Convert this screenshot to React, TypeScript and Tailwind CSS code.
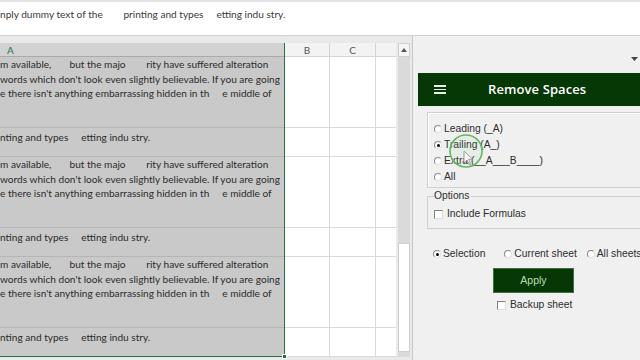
import React from "react"

const sheetFont = { fontFamily: "Lato, 'Open Sans', sans-serif" }
const uiFont = { fontFamily: "'Liberation Sans', Arial, sans-serif" }

// ---------- small controls ----------
function Radio({ checked = false }: { checked?: boolean }) {
  return (
    <span className="relative inline-block w-[8px] h-[8px] rounded-full border border-t-[#8a8a8a] border-l-[#8a8a8a] border-r-[#e0e0e0] border-b-[#e0e0e0] bg-white shrink-0">
      {checked && <span className="absolute left-[1.5px] top-[1.5px] w-[3px] h-[3px] rounded-full bg-black" />}
    </span>
  )
}

function Check() {
  return (
    <span className="inline-block w-[9px] h-[9px] border border-t-[#808080] border-l-[#808080] border-r-[#dcdcdc] border-b-[#dcdcdc] bg-white shrink-0" />
  )
}

// ---------- sheet ----------
const longLines = [
  "m available,       but the majo        rity have suffered alteration",
  "words which don't look even slightly believable. If you are going",
  "e there isn't anything embarrassing hidden in th     e middle of",
]
const shortLine = "nting and types     etting indu stry."

function SheetRow({ tall, last }: { tall: boolean; last?: boolean }) {
  const h = tall ? "h-[71px]" : "h-[29px]"
  return (
    <div className={`flex ${h}`}>
      <div
        className={`w-[284px] bg-[#c9c9c9] text-[#2b2b2b] text-[10.1px] leading-[14.5px] whitespace-pre overflow-hidden ${
          last ? "" : "border-b border-[#b5b5b5]"
        } ${tall ? "" : "pt-[2px]"}`}
      >
        {tall ? longLines.map((l) => <div key={l}>{l}</div>) : <div>{shortLine}</div>}
      </div>
      <div className="w-[1px] bg-[#217346]" />
      <div className="w-[45px] bg-white border-r border-b border-[#dadada]" />
      <div className="w-[46px] bg-white border-r border-b border-[#dadada]" />
      <div className="w-[20px] bg-white border-b border-[#dadada]" />
    </div>
  )
}

function Sheet() {
  return (
    <div className="flex flex-col w-[412px] bg-[#e9e9e9]" style={sheetFont}>
      <div className="h-[7px]" />
      <div className="flex">
        <div className="flex flex-col w-[396px]">
          {/* column headers */}
          <div className="flex h-[14px] text-[10px] leading-[14px]">
            <div className="w-[284px] bg-[#d2d2d2] text-[#217346] pl-[7px] border-b border-[#aaaaaa]">A</div>
            <div className="w-[1px] bg-[#217346]" />
            <div className="w-[45px] bg-[#f3f3f3] text-[#555] text-center border-r border-b border-[#d4d4d4]">B</div>
            <div className="w-[46px] bg-[#f3f3f3] text-[#555] text-center border-r border-b border-[#d4d4d4]">C</div>
            <div className="w-[20px] bg-[#f3f3f3] border-b border-[#d4d4d4]" />
          </div>
          <SheetRow tall />
          <SheetRow tall={false} />
          <SheetRow tall />
          <SheetRow tall={false} />
          <SheetRow tall />
          <div className="relative">
            <SheetRow tall={false} last />
            <div className="absolute left-0 bottom-0 w-[285px] h-[1px] bg-[#217346]" />
            <div className="absolute left-[282px] bottom-[-2px] w-[5px] h-[5px] bg-[#217346] border border-white" />
          </div>
        </div>
        {/* vertical scrollbar */}
        <div className="flex flex-col w-[14px] pl-[2px]">
          <div className="h-[14px] bg-[#f5f5f5] border border-[#d0d0d0] flex items-center justify-center">
            <svg width="6" height="4" viewBox="0 0 6 4">
              <path d="M0 4 L3 0 L6 4 Z" fill="#555" />
            </svg>
          </div>
          <div className="h-[186px] bg-[#dadada]" />
          <div className="h-[109px] bg-white border border-[#cfcfcf]" />
          <div className="flex-1 bg-[#dadada]" />
        </div>
      </div>
    </div>
  )
}

// ---------- task pane ----------
function Pane() {
  return (
    <div
      className="relative flex-1 min-w-0 overflow-hidden flex flex-col bg-[#f0f0f0] border-l border-[#c8c8c8] text-[#2e2e2e]"
      style={uiFont}
    >
      <div className="h-[37px] flex justify-end items-start pt-[21px] pr-[2px]">
        <svg width="7" height="4" viewBox="0 0 7 4">
          <path d="M0 0 L7 0 L3.5 4 Z" fill="#444" />
        </svg>
      </div>

      <div className="h-[33px] ml-[5px] bg-[#053805] flex items-center">
        <div className="ml-[16px] flex flex-col gap-[2px]">
          <span className="block w-[12px] h-[1.5px] bg-[#e8f0e8]" />
          <span className="block w-[12px] h-[1.5px] bg-[#e8f0e8]" />
          <span className="block w-[12px] h-[1.5px] bg-[#e8f0e8]" />
        </div>
        <div
          className="ml-[42px] text-white text-[13px] font-semibold tracking-[0.1px]"
          style={{ fontFamily: "'Open Sans', 'Noto Sans', sans-serif" }}
        >
          Remove Spaces
        </div>
      </div>

      {/* mode group */}
      <div className="ml-[14px] mt-[6px] h-[76px] border border-r-0 border-[#cfcfcf] shadow-[inset_1px_1px_0_#ffffff] pl-[6px] pt-[8px] flex flex-col text-[10.3px] leading-[16px] whitespace-nowrap">
        <label className="flex items-center gap-[2px]">
          <Radio />
          <span>Leading (_A)</span>
        </label>
        <label className="flex items-center gap-[2px]">
          <Radio checked />
          <span>Trailing (A_)</span>
        </label>
        <label className="flex items-center gap-[2px]">
          <Radio />
          <span>Extra (__A___B____)</span>
        </label>
        <label className="flex items-center gap-[2px]">
          <Radio />
          <span>All</span>
        </label>
      </div>

      {/* options group */}
      <div className="relative ml-[14px] mt-[8px] h-[33px] border border-r-0 border-[#cfcfcf] pl-[6px] pt-[10px] text-[10.3px] leading-[14px]">
        <span className="absolute left-[6px] top-[-8px] bg-[#f0f0f0] pr-[1px]">Options</span>
        <label className="flex items-center gap-[4px]">
          <Check />
          <span>Include Formulas</span>
        </label>
      </div>

      {/* scope */}
      <div className="ml-[20px] mt-[18px] flex items-center text-[10.3px] leading-[14px] whitespace-nowrap">
        <label className="flex items-center gap-[2px] shrink-0">
          <Radio checked />
          <span>Selection</span>
        </label>
        <label className="ml-[19px] flex items-center gap-[2px] shrink-0">
          <Radio />
          <span>Current sheet</span>
        </label>
        <label className="ml-[10px] flex items-center gap-[2px] shrink-0">
          <Radio />
          <span>All sheets</span>
        </label>
      </div>

      <button className="ml-[80px] mt-[7px] w-[81px] h-[25px] bg-[#053805] border border-[#3f6f3f] text-[#b9dfb0] text-[10.5px]">
        Apply
      </button>

      <label className="ml-[84px] mt-[5px] flex items-center gap-[4px] text-[10.3px] leading-[14px]">
        <Check />
        <span>Backup sheet</span>
      </label>

      {/* mouse highlight over the pane */}
      <svg className="absolute left-[34px] top-[96px] pointer-events-none" width="40" height="40" viewBox="0 0 40 40">
        <circle cx="19" cy="19" r="16" fill="rgba(120,200,120,0.08)" stroke="#5fb85f" strokeWidth="1.6" />
        <path
          d="M17 19 L17 31 L20 28 L22.5 33 L24 32.3 L21.6 27.4 L25.5 27.2 Z"
          fill="#f4f4f4"
          stroke="#8a8a8a"
          strokeWidth="0.8"
        />
      </svg>
    </div>
  )
}

export default function App() {
  return (
    <div className="w-[640px] h-[360px] overflow-hidden flex flex-col bg-[#e9e9e9]">
      <div
        className="h-[36px] bg-white border-t-[2px] border-t-[#e4e4e4] border-b border-b-[#cfcfcf] text-[#3a3a3a] text-[10.1px] leading-[14px] pt-[5px] whitespace-pre"
        style={sheetFont}
      >
        {"nply dummy text of the        printing and types     etting indu stry."}
      </div>
      <div className="flex flex-1 min-h-0">
        <Sheet />
        <Pane />
      </div>
    </div>
  )
}
